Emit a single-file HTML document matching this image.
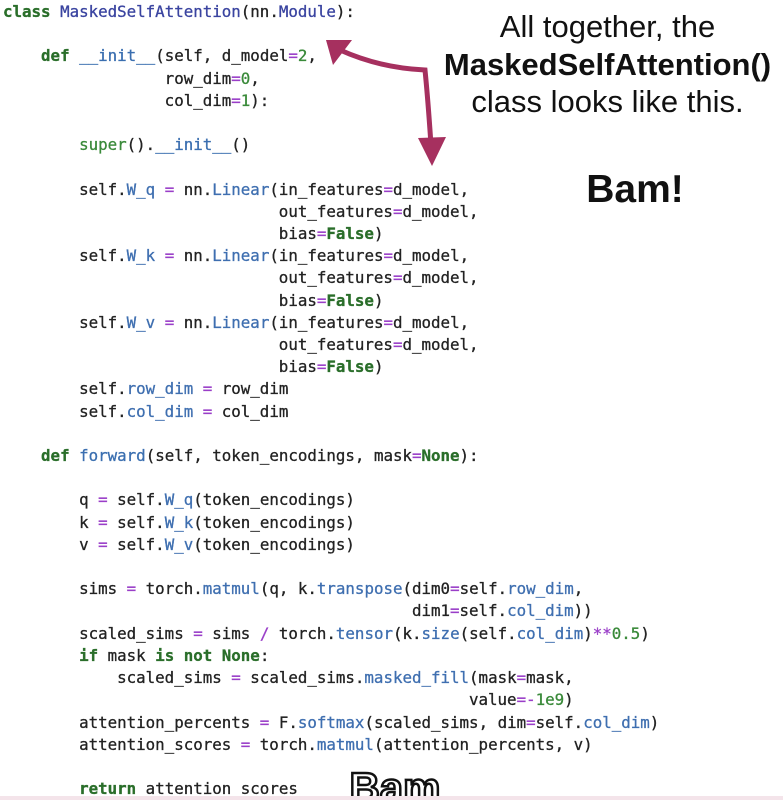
<!DOCTYPE html>
<html><head><meta charset="utf-8"><style>
html,body{margin:0;padding:0;background:#fff;width:783px;height:800px;overflow:hidden;position:relative}
pre{position:absolute;left:3px;top:1px;margin:0;font-family:"DejaVu Sans Mono","Liberation Mono",monospace;font-size:15.8px;line-height:22.2px;color:#222;-webkit-text-stroke:0.3px currentColor}
.k{color:#2a6e2a;font-weight:bold}.c{color:#3a44a0}.b{color:#3b6fb0}.o{color:#9a3fc8}.n{color:#3a8a3a}.f{color:#3f6fb0}
.t{position:absolute;font-family:"Liberation Sans",sans-serif;color:#111;text-align:center;white-space:nowrap}
</style></head><body>
<pre><span class="k">class</span> <span class="c">MaskedSelfAttention</span>(nn.<span class="c">Module</span>):

    <span class="k">def</span> <span class="b">__init__</span>(self, d_model<span class="o">=</span><span class="n">2</span>,
                 row_dim<span class="o">=</span><span class="n">0</span>,
                 col_dim<span class="o">=</span><span class="n">1</span>):

        <span class="n">super</span>().<span class="b">__init__</span>()

        self.<span class="f">W_q</span> <span class="o">=</span> nn.<span class="f">Linear</span>(in_features<span class="o">=</span>d_model,
                             out_features<span class="o">=</span>d_model,
                             bias<span class="o">=</span><span class="k">False</span>)
        self.<span class="f">W_k</span> <span class="o">=</span> nn.<span class="f">Linear</span>(in_features<span class="o">=</span>d_model,
                             out_features<span class="o">=</span>d_model,
                             bias<span class="o">=</span><span class="k">False</span>)
        self.<span class="f">W_v</span> <span class="o">=</span> nn.<span class="f">Linear</span>(in_features<span class="o">=</span>d_model,
                             out_features<span class="o">=</span>d_model,
                             bias<span class="o">=</span><span class="k">False</span>)
        self.<span class="f">row_dim</span> <span class="o">=</span> row_dim
        self.<span class="f">col_dim</span> <span class="o">=</span> col_dim

    <span class="k">def</span> <span class="b">forward</span>(self, token_encodings, mask<span class="o">=</span><span class="k">None</span>):

        q <span class="o">=</span> self.<span class="f">W_q</span>(token_encodings)
        k <span class="o">=</span> self.<span class="f">W_k</span>(token_encodings)
        v <span class="o">=</span> self.<span class="f">W_v</span>(token_encodings)

        sims <span class="o">=</span> torch.<span class="f">matmul</span>(q, k.<span class="f">transpose</span>(dim0<span class="o">=</span>self.<span class="f">row_dim</span>,
                                           dim1<span class="o">=</span>self.<span class="f">col_dim</span>))
        scaled_sims <span class="o">=</span> sims <span class="o">/</span> torch.<span class="f">tensor</span>(k.<span class="f">size</span>(self.<span class="f">col_dim</span>)<span class="o">**</span><span class="n">0.5</span>)
        <span class="k">if</span> mask <span class="k">is not None</span>:
            scaled_sims <span class="o">=</span> scaled_sims.<span class="f">masked_fill</span>(mask<span class="o">=</span>mask,
                                                 value<span class="o">=-</span><span class="n">1e9</span>)
        attention_percents <span class="o">=</span> F.<span class="f">softmax</span>(scaled_sims, dim<span class="o">=</span>self.<span class="f">col_dim</span>)
        attention_scores <span class="o">=</span> torch.<span class="f">matmul</span>(attention_percents, v)

        <span class="k">return</span> attention_scores</pre>
<div class="t" style="left:420px;top:8px;width:375px;font-size:31px;line-height:37.5px">All together, the<br><b>MaskedSelfAttention()</b><br>class looks like this.</div>
<div class="t" style="left:560px;top:168px;width:150px;font-size:39px;font-weight:bold">Bam!</div>
<div class="t" style="left:340px;top:764px;width:110px;font-size:42px;font-weight:bold;color:#fff;-webkit-text-stroke:2.5px #111">Bam</div>
<svg width="783" height="800" style="position:absolute;left:0;top:0" viewBox="0 0 783 800">
<path d="M340 50 Q380 68 425 70 Q428 100 431 145" fill="none" stroke="#a6305f" stroke-width="5" stroke-linecap="round"/>
<polygon points="326,40 352,40 333,65" fill="#a6305f"/>
<polygon points="418,138 446,137 432,166" fill="#a6305f"/>
<rect x="0" y="796" width="783" height="4" fill="#f4e4ea"/>
</svg>
</body></html>
